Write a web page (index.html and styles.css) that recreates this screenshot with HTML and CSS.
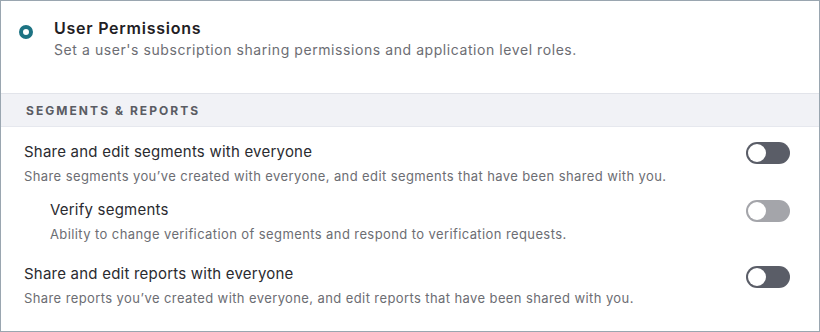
FILE: index.html
```html
<!DOCTYPE html>
<html>
<head>
<meta charset="utf-8">
<link rel="stylesheet" href="styles.css">
</head>
<body>
<div class="panel">
  <div class="header">
    <span class="radio"></span>
    <div class="header-text">
      <div class="title">User Permissions</div>
      <div class="subtitle">Set a user's subscription sharing permissions and application level roles.</div>
    </div>
  </div>
  <div class="section">SEGMENTS &amp; REPORTS</div>
  <div class="rows">
    <div class="row">
      <div class="row-text">
        <div class="row-title">Share and edit segments with everyone</div>
        <div class="row-desc">Share segments you’ve created with everyone, and edit segments that have been shared with you.</div>
      </div>
      <span class="toggle"><span class="knob"></span></span>
    </div>
    <div class="row sub">
      <div class="row-text">
        <div class="row-title">Verify segments</div>
        <div class="row-desc">Ability to change verification of segments and respond to verification requests.</div>
      </div>
      <span class="toggle disabled"><span class="knob"></span></span>
    </div>
    <div class="row last">
      <div class="row-text">
        <div class="row-title">Share and edit reports with everyone</div>
        <div class="row-desc">Share reports you’ve created with everyone, and edit reports that have been shared with you.</div>
      </div>
      <span class="toggle"><span class="knob"></span></span>
    </div>
  </div>
</div>
</body>
</html>
```
FILE: styles.css
```css
* { box-sizing: border-box; }
html, body { margin: 0; padding: 0; background: #fff; }
body { font-family: Inter, "Noto Sans", sans-serif; }
.panel {
  width: 820px;
  height: 332px;
  border: 1px solid #9aa6b0;
  background: #fff;
  overflow: hidden;
}
.header {
  display: flex;
  align-items: flex-start;
  padding: 17px 0 0 18px;
  height: 92px;
}
.radio {
  width: 14px;
  height: 14px;
  border-radius: 50%;
  border: 4px solid #1d7383;
  margin-top: 7px;
  margin-right: 21px;
  flex: none;
}
.title {
  font-size: 16px;
  font-weight: 600;
  color: #1f2024;
  line-height: 20px;
  letter-spacing: 0.75px;
}
.subtitle {
  font-size: 14px;
  color: #6c6d73;
  line-height: 20px;
  margin-top: 2px;
  letter-spacing: 0.57px;
}
.section {
  height: 34px;
  background: #f1f2f6;
  border-top: 1px solid #e2e4ea;
  border-bottom: 1px solid #e6e8ee;
  padding-left: 25px;
  font-size: 12px;
  font-weight: 700;
  letter-spacing: 2.05px;
  color: #5a5c63;
  display: flex;
  align-items: center;
}
.rows { padding-top: 14px; }
.row {
  display: flex;
  align-items: flex-start;
  justify-content: space-between;
  padding: 0 29px 0 23px;
  height: 58px;
}
.row.sub { padding-left: 49px; height: 64px; }
.row-title {
  font-size: 15px;
  color: #2a2b30;
  line-height: 22px;
  letter-spacing: 0.22px;
}
.row-desc {
  font-size: 13px;
  color: #6c6d73;
  line-height: 18px;
  margin-top: 4px;
  letter-spacing: 0.4px;
}
.toggle {
  width: 44px;
  height: 22px;
  border-radius: 11px;
  background: #5a5d67;
  position: relative;
  flex: none;
  margin-top: 1px;
}
.row.last .toggle { margin-top: 3px; }
.toggle.disabled { background: #a4a5aa; }
.knob {
  position: absolute;
  left: 2px;
  top: 2px;
  width: 18px;
  height: 18px;
  border-radius: 50%;
  background: #fff;
}
```
